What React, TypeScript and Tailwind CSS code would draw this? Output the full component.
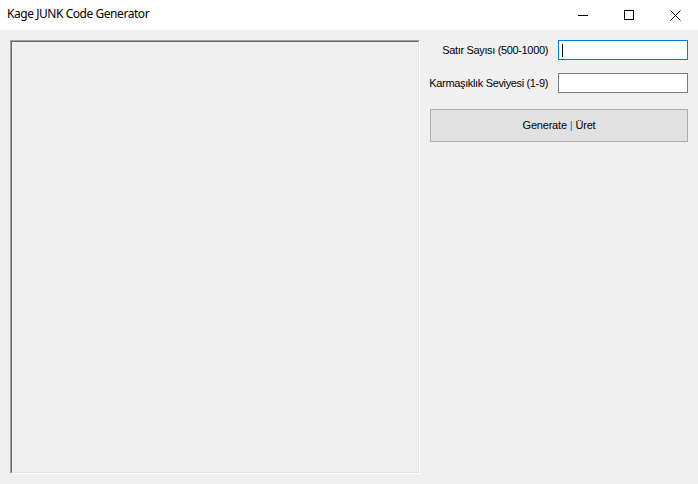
import React from "react";

function TitleBar() {
  return (
    <div className="flex h-[30px] items-stretch bg-white">
      <div className="flex flex-1 items-center pl-[7px] pb-[2px] text-[12px] tracking-[-0.45px] text-black" style={{ fontFamily: '"Noto Sans", "Open Sans", sans-serif' }}>
        Kage JUNK Code Generator
      </div>
      <div className="flex w-[46px] items-center justify-center">
        <svg width="10" height="10" viewBox="0 0 10 10">
          <line x1="0" y1="5.5" x2="10" y2="5.5" stroke="#000" strokeWidth="1" />
        </svg>
      </div>
      <div className="flex w-[46px] items-center justify-center">
        <svg width="10" height="10" viewBox="0 0 10 10">
          <rect x="0.5" y="0.5" width="9" height="9" fill="none" stroke="#000" strokeWidth="1" />
        </svg>
      </div>
      <div className="flex w-[46px] items-center justify-center">
        <svg width="11" height="11" viewBox="0 0 11 11">
          <path d="M0.5 0.5 L10.5 10.5 M10.5 0.5 L0.5 10.5" stroke="#000" strokeWidth="1" fill="none" />
        </svg>
      </div>
    </div>
  );
}

export default function App() {
  const ui = { fontFamily: '"Liberation Sans", Arial, sans-serif' };
  return (
    <div className="flex h-[484px] w-[698px] flex-col overflow-hidden bg-[#f0f0f0]" style={ui}>
      <TitleBar />
      <div className="flex flex-1 pl-[10px] pt-[10px]">
        {/* multiline output box with sunken 3D border */}
        <div className="h-[434px] w-[410px] border border-t-[#a0a0a0] border-l-[#a0a0a0] border-b-white border-r-white">
          <div className="h-full w-full border border-t-[#696969] border-l-[#696969] border-b-[#e3e3e3] border-r-[#e3e3e3] bg-[#f0f0f0]" />
        </div>
        <div className="flex flex-1 flex-col pr-[10px]">
          <div className="flex h-[20px] items-center">
            <div className="flex-1 pr-[10px] text-right text-[11px] tracking-[-0.35px] text-black">Satır Sayısı (500-1000)</div>
            <div className="flex h-[20px] w-[130px] items-center border border-[#0078d7] bg-white pl-[3px]">
              <div className="h-[13px] w-px bg-black" />
            </div>
          </div>
          <div className="mt-[13px] flex h-[20px] items-center">
            <div className="flex-1 pr-[10px] text-right text-[11px] tracking-[-0.35px] text-black">Karmaşıklık Seviyesi (1-9)</div>
            <div className="h-[20px] w-[130px] border border-[#7a7a7a] bg-white" />
          </div>
          <button className="ml-[10px] mt-[16px] flex h-[33px] w-[258px] items-center justify-center border border-[#adadad] bg-[#e1e1e1] text-[11px] tracking-[-0.2px] text-black">
            Generate <span className="mx-[3px] text-[#0078d7]">|</span> Üret
          </button>
        </div>
      </div>
    </div>
  );
}
